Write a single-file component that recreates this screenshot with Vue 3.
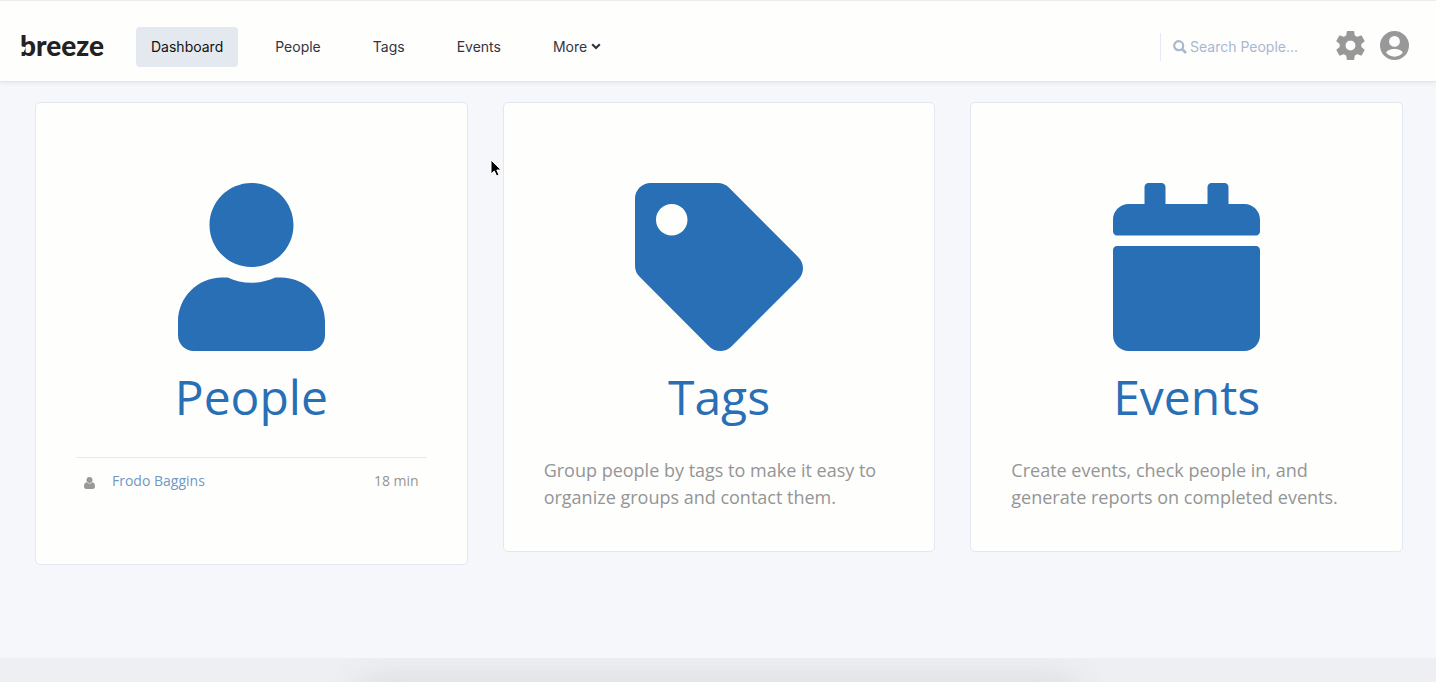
<script setup>
import { ref } from 'vue'

const search = ref('')
const links = ['Dashboard', 'People', 'Tags', 'Events']
const recent = [{ name: 'Frodo Baggins', time: '18 min' }]

const cards = [
  {
    title: 'People',
    box: '0 0 448 512',
    path: 'M224 256c70.7 0 128-57.3 128-128S294.7 0 224 0 96 57.3 96 128s57.3 128 128 128zm89.6 32h-16.7c-22.2 10.2-46.9 16-72.9 16s-50.6-5.8-72.9-16h-16.7C60.2 288 0 348.2 0 422.4V464c0 26.5 21.5 48 48 48h352c26.5 0 48-21.5 48-48v-41.6c0-74.2-60.2-134.4-134.4-134.4z',
  },
  {
    title: 'Tags',
    box: '0 0 512 512',
    path: 'M0 252.118V48C0 21.49 21.49 0 48 0h204.118a48 48 0 0 1 33.941 14.059l211.882 211.882c18.745 18.745 18.745 49.137 0 67.882L293.823 497.941c-18.745 18.745-49.137 18.745-67.882 0L14.059 286.059A48 48 0 0 1 0 252.118zM112 64c-26.51 0-48 21.49-48 48s21.49 48 48 48 48-21.49 48-48-21.49-48-48-48z',
    text: 'Group people by tags to make it easy to organize groups and contact them.',
  },
  {
    title: 'Events',
    box: '0 0 448 512',
    path: 'M12 192h424c6.6 0 12 5.4 12 12v260c0 26.5-21.5 48-48 48H48c-26.5 0-48-21.5-48-48V204c0-6.6 5.4-12 12-12zm436-44v-36c0-26.5-21.5-48-48-48h-48V12c0-6.6-5.4-12-12-12h-40c-6.6 0-12 5.4-12 12v52H160V12c0-6.6-5.4-12-12-12h-40c-6.6 0-12 5.4-12 12v52H48C21.5 64 0 85.5 0 112v36c0 6.6 5.4 12 12 12h424c6.6 0 12-5.4 12-12z',
    text: 'Create events, check people in, and generate reports on completed events.',
  },
]
</script>

<template>
  <div class="page">
    <header class="header">
      <a class="logo" href="#">breeze</a>
      <nav class="nav">
        <a
          v-for="(link, i) in links"
          :key="link"
          href="#"
          class="nav-item"
          :class="{ active: i === 0 }"
        >{{ link }}</a>
        <button type="button" class="nav-item more">
          More
          <svg class="chevron" viewBox="0 0 10 9" aria-hidden="true">
            <path d="M1.2 1.2 5 5l3.8-3.8" fill="none" stroke="currentColor" stroke-width="2.2" />
          </svg>
        </button>
      </nav>
      <label class="search">
        <svg class="search-icon" viewBox="0 0 14 14" aria-hidden="true">
          <circle cx="5.7" cy="5.7" r="4.5" fill="none" stroke="currentColor" stroke-width="2.2" />
          <path d="m9 9 4 4" stroke="currentColor" stroke-width="2.6" />
        </svg>
        <input v-model="search" type="text" placeholder="Search People..." aria-label="Search People" />
      </label>
      <button type="button" class="icon-button" aria-label="Settings">
        <svg viewBox="0 0 28 29" aria-hidden="true">
          <path
            fill-rule="evenodd"
            stroke="#989898"
            stroke-width="1.5"
            stroke-linejoin="round"
            d="M11 .8h6l.6 4.2 3 1.7 4-1.6 2.8 4.9-3.3 2.7v3.6l3.3 2.7-2.8 4.9-4-1.6-3 1.7-.6 4.2h-6l-.6-4.2-3-1.7-4 1.6-2.8-4.9 3.3-2.7v-3.6L.6 10l2.8-4.9 4 1.6 3-1.7zM14 8.800a5.700 5.700 0 1 0 0 11.400 5.700 5.700 0 0 0 0-11.400z"
          />
        </svg>
      </button>
      <button type="button" class="icon-button" aria-label="Account">
        <svg viewBox="0 0 30 30" aria-hidden="true">
          <path
            fill-rule="evenodd"
            d="M15 0a15 15 0 1 1 0 30 15 15 0 0 1 0-30zm0 5.2a5.6 5.6 0 1 0 0 11.2 5.6 5.6 0 0 0 0-11.2zm0 13.3c-4.6 0-8.6 2-8.6 4.1 1.8 2.5 5.1 4 8.6 4s6.800-1.500 8.600-4c0-2.100-4-4.100-8.600-4.100z"
          />
        </svg>
      </button>
    </header>

    <main class="cards">
      <section v-for="card in cards" :key="card.title" class="card">
        <a class="card-link" href="#">
          <svg class="card-icon" :viewBox="card.box" aria-hidden="true">
            <path :d="card.path" />
          </svg>
          <h2>{{ card.title }}</h2>
        </a>
        <p v-if="card.text">{{ card.text }}</p>
        <table v-else>
          <tbody>
            <tr v-for="row in recent" :key="row.name">
              <td class="person-cell">
                <svg class="person" viewBox="0 0 11 12" aria-hidden="true">
                  <circle cx="5.5" cy="3" r="3" />
                  <path d="M2.600 5.200C.6 5.200 0 7.500 0 9.600 0 11 .8 12 2.200 12h6.600c1.400 0 2.200-1 2.200-2.400 0-2.100-.6-4.400-2.600-4.400-1.800 1.600-4 1.600-5.800 0z" />
                </svg>
              </td>
              <td><a href="#">{{ row.name }}</a></td>
              <td class="time">{{ row.time }}</td>
            </tr>
          </tbody>
        </table>
      </section>
    </main>

    <footer class="footer"><div class="dock-shade"></div></footer>

    <svg class="cursor" viewBox="0 0 12 18" aria-hidden="true">
      <path
        d="M1 1v14l3.300-3 2.300 5 2.400-1-2.200-5h4.400z"
        fill="#000"
        stroke="#fff"
        stroke-width="1"
      />
    </svg>
  </div>
</template>

<style>
body {
  margin: 0;
}
</style>

<style scoped>
.page {
  position: relative;
  display: flex;
  flex-direction: column;
  min-height: 100vh;
  background: #f5f7fa;
  font-family: 'Open Sans', 'Noto Sans', sans-serif;
}

a {
  text-decoration: none;
}

button {
  border: 0;
  padding: 0;
  background: none;
  cursor: pointer;
}

.header {
  display: flex;
  align-items: center;
  box-sizing: border-box;
  height: 82px;
  padding: 12px 27px 0 20px;
  border-top: 1px solid #ececee;
  border-bottom: 1px solid #e0e8ef;
  background: #fefefd;
  box-shadow: 0 1px 4px rgba(60, 90, 130, 0.1);
  font-family: Inter, 'Liberation Sans', sans-serif;
}

.logo {
  position: relative;
  width: 116px;
  margin-bottom: 4px;
  color: #222;
  font: 900 28px/32px Lato, sans-serif;
}

/* The opening in the left side of the letter b */
.logo::before {
  content: '';
  position: absolute;
  left: 0;
  top: 17px;
  width: 6px;
  height: 6px;
  background: #fefefd;
  clip-path: polygon(0 0, 100% 20%, 60% 100%, 0 100%);
}

.nav {
  display: flex;
  gap: 22px;
  flex: 1;
}

.nav-item {
  padding: 0 15px;
  border-radius: 4px;
  color: #34343f;
  font: 400 14px/40px Inter, 'Liberation Sans', sans-serif;
}

.nav-item.active {
  background: #e4e9f0;
  color: #111;
}

.chevron {
  width: 10px;
  height: 9px;
}

.search {
  display: flex;
  align-items: center;
  gap: 3px;
  width: 163px;
  height: 28px;
  padding-left: 12px;
  border-left: 1px solid #e6eaf3;
  color: #a9b7d1;
}

.search-icon {
  flex: none;
  width: 14px;
  height: 14px;
}

.search input {
  flex: 1;
  min-width: 0;
  padding: 0;
  border: 0;
  outline: 0;
  background: none;
  color: #34343f;
  font: 400 14px/20px Inter, 'Liberation Sans', sans-serif;
}

.search input::placeholder {
  color: #a9b7d1;
  opacity: 1;
}

.icon-button {
  width: 29px;
  height: 29px;
  margin: 0 0 3px 15px;
}

.search + .icon-button {
  margin-left: 0;
}

.icon-button svg {
  display: block;
  width: 100%;
  height: 100%;
  fill: #989898;
}

.cards {
  display: grid;
  grid-template-columns: repeat(3, 1fr);
  align-items: start;
  gap: 35px;
  flex: 1;
  padding: 20px 33px 40px 35px;
}

.card {
  padding: 80px 40px 40px;
  border: 1px solid #e2e8f1;
  border-radius: 5px;
  background: #fefefd;
}

.card-link {
  display: block;
  color: #286fb5;
  text-align: center;
}

.card-icon {
  display: block;
  height: 168px;
  margin: 0 auto;
  fill: currentColor;
}

h2 {
  margin: 13px 0 28px;
  font-size: 48px;
  font-weight: 400;
  line-height: 65px;
}

p {
  margin: 0;
  color: #949597;
  font-size: 18px;
  line-height: 27px;
}

table {
  width: 100%;
  margin-bottom: 20px;
  border-collapse: collapse;
  border-top: 1px solid #e9eaec;
  color: #949597;
  font-size: 14px;
  line-height: 20px;
}

td {
  padding: 13px 8px;
}

td a {
  color: #7097c5;
}

.person-cell {
  width: 12px;
}

.person {
  display: block;
  width: 11px;
  height: 12px;
  margin-top: 4px;
  fill: #999;
}

.time {
  text-align: right;
}

.footer {
  height: 24px;
  overflow: hidden;
  background: #eeeff2;
}

.dock-shade {
  width: 49%;
  height: 24px;
  margin: 30px auto 0;
  background: #ccc;
  box-shadow: 0 0 36px 4px rgba(110, 110, 110, 0.2);
}

.cursor {
  position: absolute;
  left: 490px;
  top: 159px;
  width: 12px;
  height: 18px;
}
</style>
